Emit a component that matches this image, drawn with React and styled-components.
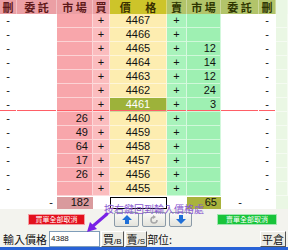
import React from 'react'
import styled, { createGlobalStyle } from 'styled-components'

const GlobalStyle = createGlobalStyle`
  html, body {
    margin: 0;
    padding: 0;
  }
  body {
    width: 288px;
    height: 250px;
    overflow: hidden;
    font-family: "Liberation Sans", Arial, sans-serif;
  }
`;

const COLS = '17px 40px 36px 17px 57px 20px 34px 38px 17px 12px';

const HEAD = {
  buy: { bg: '#eb9fa4', fg: '#5e1818' },
  price: { bg: '#cdc42a', fg: '#3a3000' },
  sell: { bg: '#b2c46a', fg: '#2e3600' },
  edge: { bg: '#eaf7e4', fg: '#000' },
};

const BODY = {
  del: '#ffffff',
  entrust: '#ffffff',
  buyMkt: '#f8a6ab',
  buy: '#fbbcbe',
  price: '#fdedb0',
  current: '#9db23a',
  sell: '#a8f3bb',
  sellMkt: '#9ef0b2',
  edge: '#eaf7e4',
};

const Frame = styled.div`
  position: relative;
  width: 288px;
  height: 250px;
  box-sizing: border-box;
  display: flex;
  flex-direction: column;
  background: #f3f3ee;
  border-bottom: 3px solid #2862d6;
`;

const Grid = styled.div`
  display: grid;
  grid-template-columns: ${COLS};
  grid-auto-rows: 14px;
`;

const Head = styled.div`
  background: ${p => HEAD[p.$side].bg};
  color: ${p => HEAD[p.$side].fg};
  font-family: "Noto Sans CJK TC", "Noto Sans CJK SC", sans-serif;
  font-weight: 700;
  font-size: 11px;
  line-height: 14px;
  text-align: center;
  white-space: pre;
  word-spacing: ${p => (p.$wide ? '12px' : '0')};
  overflow: hidden;
  border-right: 1px solid rgba(255, 255, 255, 0.35);
`;

const Cell = styled.div`
  box-sizing: border-box;
  background: ${p => p.$bg || '#fff'};
  color: ${p => p.$fg || '#111'};
  text-align: ${p => p.$align || 'center'};
  padding-right: ${p => (p.$align === 'right' ? '4px' : '0')};
  font-size: 11px;
  line-height: 13px;
  border-right: 1px solid rgba(255, 255, 255, 0.55);
  border-bottom: 1px solid rgba(255, 255, 255, 0.5);
  box-shadow: ${p => (p.$line ? 'inset 0 -1px 0 #ff5e66' : 'none')};
`;

const SumRow = styled.div`
  display: grid;
  grid-template-columns: ${COLS};
  height: 14px;
  background: #fff;
  align-items: center;
`;

const SumCell = styled.div`
  height: 12px;
  box-sizing: border-box;
  font-size: 11px;
  line-height: 11px;
  text-align: ${p => p.$align || 'center'};
  padding-right: ${p => (p.$align === 'right' ? '4px' : '0')};
  background: ${p => p.$bg || 'transparent'};
  border: ${p => (p.$boxed ? '1px solid #000' : 'none')};
  color: #111;
`;

const EdgeCell = styled.div`
  background: ${BODY.edge};
  align-self: stretch;
`;

const ButtonRow = styled.div`
  display: flex;
  align-items: center;
  height: 15px;
  margin-top: 3px;
  padding-left: 28px;
`;

const CancelButton = styled.div`
  width: ${p => p.$w}px;
  height: 11px;
  margin-right: ${p => p.$mr || 0}px;
  background: ${p => p.$color};
  border: 1px solid rgba(255, 255, 255, 0.6);
  box-sizing: border-box;
  color: #fff;
  font-family: "Noto Sans CJK TC", sans-serif;
  font-size: 7px;
  line-height: 9px;
  text-align: center;
`;

const NavButton = styled.div`
  width: ${p => p.$w}px;
  height: 15px;
  margin-right: ${p => p.$mr || 0}px;
  box-sizing: border-box;
  border: 1px solid #8a9aa8;
  border-radius: 2px;
  background: linear-gradient(#fbfbf8, #e3e3dc);
  display: flex;
  align-items: center;
  justify-content: center;
`;

const InputRow = styled.div`
  display: flex;
  align-items: center;
  height: 17px;
  margin-top: 4px;
  padding-left: 3px;
  padding-right: 2px;
`;

const Label = styled.span`
  font-family: "Noto Sans CJK TC", sans-serif;
  font-size: 11px;
  line-height: 15px;
  color: #111;
  margin-right: ${p => p.$mr || 0}px;
`;

const PriceInput = styled.div`
  width: 51px;
  height: 16px;
  box-sizing: border-box;
  border: 1px solid #7f9db9;
  background: #fff;
  font-size: 8px;
  line-height: 14px;
  padding-left: 1px;
  color: #222;
`;

const SideButton = styled.div`
  height: 16px;
  box-sizing: border-box;
  padding: 0 1px;
  margin-left: 1px;
  border: 1px solid #fff;
  border-right-color: #555;
  border-bottom-color: #555;
  background: #ecebe4;
  font-family: "Noto Sans CJK TC", sans-serif;
  font-size: 11px;
  line-height: 14px;
  color: #111;
  small {
    font-family: "Liberation Sans", Arial, sans-serif;
    font-size: 8px;
  }
`;

const Spacer = styled.div`
  flex: 1;
`;

const Hint = styled.div`
  position: absolute;
  left: 104px;
  top: 203px;
  font-family: "Noto Sans CJK TC", sans-serif;
  font-size: 10px;
  line-height: 12px;
  color: #8a5ad0;
  white-space: nowrap;
`;

const Pointer = styled.svg`
  position: absolute;
  left: 84px;
  top: 212px;
`;

const prices = [4467, 4466, 4465, 4464, 4463, 4462, 4461, 4460, 4459, 4458, 4457, 4456, 4455];
const buyQty = { 4460: 26, 4459: 49, 4458: 64, 4457: 17, 4456: 26 };
const sellQty = { 4465: 12, 4464: 14, 4463: 12, 4462: 24, 4461: 3 };
const current = 4461;

const UpIcon = () => (
  <svg width="10" height="9" viewBox="0 0 10 9">
    <path d="M5 0 L10 5 L7 5 L7 9 L3 9 L3 5 L0 5 Z" fill="#1f6fd8" />
  </svg>
);

const DownIcon = () => (
  <svg width="10" height="9" viewBox="0 0 10 9">
    <path d="M5 9 L10 4 L7 4 L7 0 L3 0 L3 4 L0 4 Z" fill="#1f6fd8" />
  </svg>
);

const RefreshIcon = () => (
  <svg width="10" height="10" viewBox="0 0 10 10">
    <path d="M8 5 A3 3 0 1 1 5 2" fill="none" stroke="#a8a8a8" strokeWidth="1.6" />
    <path d="M4 0 L7 2 L4 4 Z" fill="#a8a8a8" />
  </svg>
);

const App = () => {
  return (
    <Frame>
      <GlobalStyle />
      <Grid>
        <Head $side="buy">刪</Head>
        <Head $side="buy">委 託</Head>
        <Head $side="buy">市 場</Head>
        <Head $side="buy">買</Head>
        <Head $side="price" $wide>價 格</Head>
        <Head $side="sell">賣</Head>
        <Head $side="sell">市 場</Head>
        <Head $side="sell">委 託</Head>
        <Head $side="sell">刪</Head>
        <Head $side="edge" />
        {prices.map((price) => {
          const isCur = price === current;
          return (
            <React.Fragment key={price}>
              <Cell $bg={BODY.del} $line={isCur}>-</Cell>
              <Cell $bg={BODY.entrust} $line={isCur} />
              <Cell $bg={BODY.buyMkt} $align="right" $line={isCur}>{buyQty[price] || ''}</Cell>
              <Cell $bg={BODY.buy} $line={isCur}>+</Cell>
              <Cell $bg={isCur ? BODY.current : BODY.price} $fg={isCur ? '#fff' : '#111'} $line={isCur}>{price}</Cell>
              <Cell $bg={BODY.sell} $line={isCur}>+</Cell>
              <Cell $bg={BODY.sellMkt} $align="right" $line={isCur}>{sellQty[price] || ''}</Cell>
              <Cell $bg={BODY.entrust} $line={isCur} />
              <Cell $bg={BODY.del} $line={isCur}>-</Cell>
              <Cell $bg={BODY.edge} />
            </React.Fragment>
          );
        })}
      </Grid>
      <SumRow>
        <SumCell />
        <SumCell $align="right">-</SumCell>
        <SumCell $align="right" $bg="#d99a9d">182</SumCell>
        <SumCell />
        <SumCell $boxed />
        <SumCell />
        <SumCell $align="right" $bg="#a9b33c">65</SumCell>
        <SumCell>-</SumCell>
        <SumCell />
        <EdgeCell />
      </SumRow>
      <ButtonRow>
        <CancelButton $w={57} $mr={29} $color="#e3101c">買單全部取消</CancelButton>
        <NavButton $w={25} $mr={3}><UpIcon /></NavButton>
        <NavButton $w={24} $mr={3}><RefreshIcon /></NavButton>
        <NavButton $w={23} $mr={25}><DownIcon /></NavButton>
        <CancelButton $w={60} $color="#18c43a">賣單全部取消</CancelButton>
      </ButtonRow>
      <InputRow>
        <Label $mr={2}>輸入價格</Label>
        <PriceInput>4388</PriceInput>
        <SideButton>買<small>/B</small></SideButton>
        <SideButton>賣<small>/S</small></SideButton>
        <Label>部位:</Label>
        <Spacer />
        <SideButton>平倉</SideButton>
      </InputRow>
      <Hint>按右鍵回到輸入價格處</Hint>
      <Pointer width="26" height="24" viewBox="0 0 26 24">
        <path d="M23 2 L9 14" stroke="#7a22e6" strokeWidth="3" strokeLinecap="round" />
        <path d="M3 20 L6 10 L13 17 Z" fill="#7a22e6" />
      </Pointer>
    </Frame>
  );
};

export default App
